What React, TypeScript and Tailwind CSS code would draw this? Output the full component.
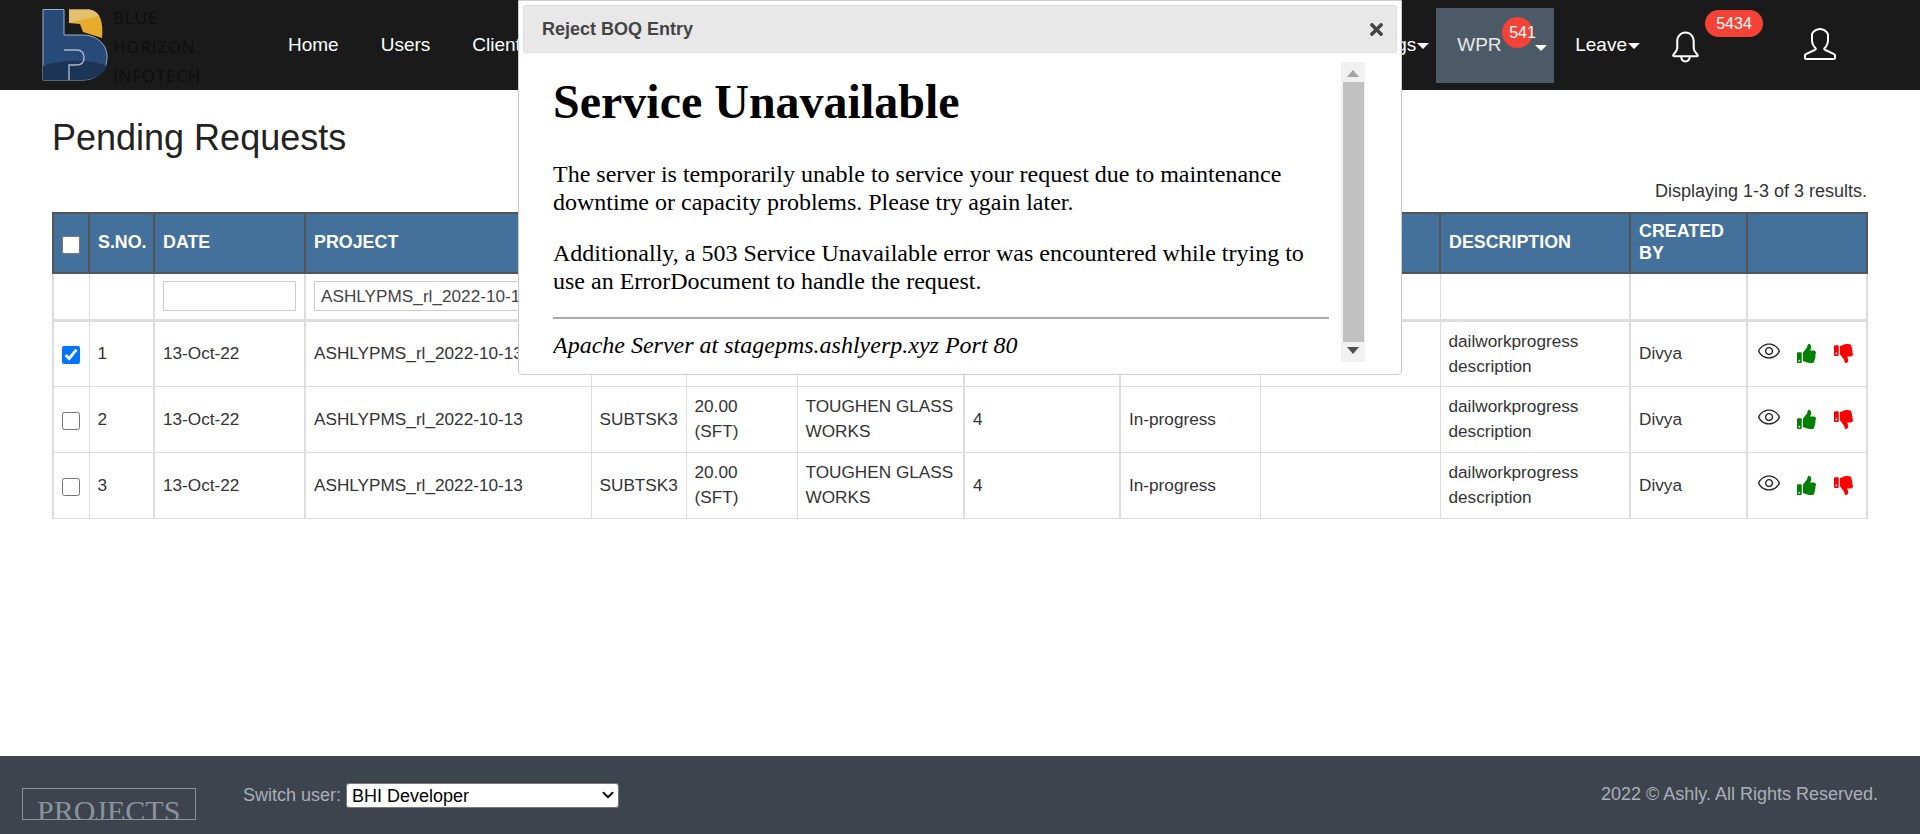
import React from "react";
import { FaThumbsUp, FaThumbsDown, FaTimes } from "react-icons/fa";
import { SlEye, SlBell, SlUser } from "react-icons/sl";
import { ChevronDown } from "lucide-react";

const cols = [
  { w: 36, b: "border-r" },
  { w: 65, b: "border-r-2" },
  { w: 151, b: "border-r-2" },
  { w: 286, b: "border-r" },
  { w: 95, b: "border-r" },
  { w: 111, b: "border-r" },
  { w: 167, b: "border-r-2" },
  { w: 156, b: "border-r-2" },
  { w: 140, b: "border-r" },
  { w: 180, b: "border-r" },
  { w: 190, b: "border-r-2" },
  { w: 117, b: "border-r-2" },
  { w: 120, b: "" },
];

const headers = ["", "S.NO.", "DATE", "PROJECT", "", "", "", "", "", "", "DESCRIPTION", "CREATED BY", ""];

function Logo() {
  return (
    <svg viewBox="0 0 200 90" className="h-[90px] w-[200px] shrink-0">
      <g transform="translate(19 0)">
        <path d="M24 9.5H45V35H63C78 35 88 44 88 57C88 71 78 80 63 80H24Z" fill="#284a79" stroke="#9fb0c4" strokeWidth="1" />
        <path d="M24 66C40 60 70 58 88 66C84 75 76 80 63 80H24Z" fill="#1c3557" />
        <path d="M45 50H58C63 50 65 53 65 58C65 63 62 65 57 65H50V80" fill="none" stroke="#a9b6c6" strokeWidth="1.4" />
        <path d="M50 9.5H68C80 9.5 85 20 83 38L64 32L61 24L50 23Z" fill="#e6ad2c" />
        <path d="M50 9.5H68C74 9.5 78 12 80 16L62 20L50 23Z" fill="#e2c06e" />
      </g>
    </svg>
  );
}

function Caret() {
  return <span className="ml-[1px] inline-block border-x-[6px] border-t-[6px] border-x-transparent border-t-white align-middle" />;
}

function NavItem({ label, caret, tight }: { label: string; caret?: boolean; tight?: boolean }) {
  return (
    <div className={`flex h-[75px] items-center whitespace-nowrap text-[19px] text-white ${tight ? "pl-[21px] pr-[7px]" : "px-[21px]"}`}>
      {label}
      {caret && <Caret />}
    </div>
  );
}

function Header() {
  return (
    <header className="flex h-[90px] shrink-0 items-start bg-[#1a1a1a]">
      <div className="relative w-[267px] shrink-0">
        <Logo />
        <div className="absolute left-[113px] top-[3px] font-['Open_Sans',sans-serif] text-[17px] leading-[29px] tracking-[0.8px] text-[#0e0e0e]">
          <div>BLUE</div>
          <div>HORIZON</div>
          <div>INFOTECH</div>
        </div>
      </div>
      <nav className="mt-[8px] flex">
        <NavItem label="Home" />
        <NavItem label="Users" />
        <NavItem label="Clients" />
      </nav>
      <div className="ml-auto mt-[8px] flex items-start pr-[84px]">
        <NavItem label="Settings" caret tight />
        <div className="relative flex h-[75px] w-[118px] items-center bg-[#4c5a67] pl-[21px] text-[19px] text-[#e8e8e8]">
          WPR
          <span className="absolute left-[66px] top-[9px] flex h-[31px] w-[31px] items-center whitespace-nowrap rounded-full bg-[#f44336] pl-[7px] text-[16px] text-white">541</span>
          <span className="absolute left-[99px] top-[37px] border-x-[6px] border-t-[6px] border-x-transparent border-t-white" />
        </div>
        <NavItem label="Leave" caret />
        <div className="relative ml-[9px] mt-[23px] h-[32px] w-[30px] text-white">
          <SlBell className="h-[32px] w-[31px]" />
          <span className="absolute left-[35px] top-[-21px] flex h-[27px] w-[58px] items-center justify-center rounded-full bg-[#f44336] text-[16px] text-white">5434</span>
        </div>
        <div className="ml-[104px] mt-[20px] text-white">
          <SlUser className="h-[32px] w-[32px]" />
        </div>
      </div>
    </header>
  );
}

function Actions() {
  return (
    <div className="flex items-center pl-[10px]">
      <SlEye className="mb-[5px] h-[22px] w-[22px] text-[#222]" />
      <FaThumbsUp className="ml-[17px] h-[19px] w-[19px] text-[#008000]" />
      <FaThumbsDown className="ml-[18px] h-[19px] w-[19px] text-[#ff0000]" />
    </div>
  );
}

function Row({ n, checked, covered }: { n: number; checked?: boolean; covered?: boolean }) {
  const cells: React.ReactNode[] = [
    <input type="checkbox" defaultChecked={checked} className="mt-[3px] block h-[18px] w-[18px]" />,
    n,
    "13-Oct-22",
    "ASHLYPMS_rl_2022-10-13",
    covered ? "" : "SUBTSK3",
    covered ? "" : <>20.00<br />(SFT)</>,
    covered ? "" : <>TOUGHEN GLASS<br />WORKS</>,
    covered ? "" : "4",
    covered ? "" : "In-progress",
    "",
    <>dailworkprogress<br />description</>,
    "Divya",
    <Actions />,
  ];
  return (
    <tr className="h-[66px]">
      {cells.map((c, i) => (
        <td key={i} className={`border-b border-[#ddd] ${cols[i].b} ${i === 0 ? "border-l-2 px-[8px]" : "px-[8px]"} ${i === 12 ? "border-r-2 !px-0" : ""} align-middle text-[17.2px] leading-[25px] text-[#333]`}>
          {c}
        </td>
      ))}
    </tr>
  );
}

function PendingTable() {
  return (
    <table className="w-[1815px] table-fixed border-collapse font-['Liberation_Sans',sans-serif]">
      <colgroup>
        {cols.map((c, i) => (
          <col key={i} span={1} width={c.w} />
        ))}
      </colgroup>
      <thead>
        <tr className="h-[60px] bg-[#44709c]">
          {headers.map((h, i) => (
            <th key={i} className="border-y-2 border-r-2 border-[#555] px-[8px] pb-[3px] text-left align-middle text-[17.85px] font-bold leading-[22px] text-white first:border-l-2">
              {i === 0 ? <input type="checkbox" className="mt-[6px] block h-[18px] w-[18px]" /> : h}
            </th>
          ))}
        </tr>
        <tr className="h-[47px] border-b-[3px] border-[#ddd]">
          {headers.map((_, i) => (
            <td key={i} className={`${cols[i].b} ${i === 0 ? "border-l-2" : ""} ${i === 12 ? "border-r-2" : ""} border-[#ddd] px-[8px] align-middle`}>
              {i === 2 && <input className="block h-[30px] w-full border border-[#ccc] bg-white" />}
              {i === 3 && <input defaultValue="ASHLYPMS_rl_2022-10-13" className="block h-[30px] w-full border border-[#ccc] bg-white px-[6px] text-[17.2px] text-[#444]" />}
            </td>
          ))}
        </tr>
      </thead>
      <tbody>
        <Row n={1} checked covered />
        <Row n={2} />
        <Row n={3} />
      </tbody>
    </table>
  );
}

function Modal() {
  return (
    <div className="absolute left-[518px] top-0 flex h-[375px] w-[884px] flex-col rounded-b-[4px] border border-[#ccc] bg-white px-[4px] pt-[4px]">
      <div className="flex h-[48px] shrink-0 items-center justify-between rounded-[3px] border border-[#ddd] bg-[#e8e8e8] pl-[18px] pr-[11px] font-['Liberation_Sans',sans-serif] text-[18px] font-bold text-[#444]">
        <span>Reject BOQ Entry</span>
        <FaTimes className="h-[19px] w-[17px] text-[#444]" />
      </div>
      <div className="mt-[9px] flex h-[300px] pl-[30px]">
        <div className="w-[776px] shrink-0 overflow-hidden font-['Liberation_Serif',serif] text-[24px] leading-[27.6px] text-black">
          <h1 className="mb-[32px] mt-[12px] text-[48px] font-bold leading-[55px]">Service Unavailable</h1>
          <p>The server is temporarily unable to service your request due to maintenance downtime or capacity problems. Please try again later.</p>
          <p className="mt-[24px]">Additionally, a 503 Service Unavailable error was encountered while trying to use an ErrorDocument to handle the request.</p>
          <hr className="mt-[22px] border-t-2 border-[#aaa]" />
          <p className="mt-[13px] italic">Apache Server at stagepms.ashlyerp.xyz Port 80</p>
        </div>
        <div className="ml-[12px] flex h-[300px] w-[24px] flex-col items-center justify-between bg-[#f1f1f1] py-[8px]">
          <span className="border-x-[6px] border-b-[7px] border-x-transparent border-b-[#a3a3a3]" />
          <div className="my-[5px] w-[21px] flex-1 bg-[#c1c1c1]" />
          <span className="border-x-[6px] border-t-[7px] border-x-transparent border-t-[#505050]" />
        </div>
      </div>
    </div>
  );
}

export default function App() {
  return (
    <div className="relative flex h-[834px] w-[1920px] flex-col overflow-hidden bg-white font-['Liberation_Sans',sans-serif]">
      <Header />
      <main className="flex-1 pl-[52px]">
        <h1 className="mt-[24px] text-[36px] font-normal leading-[48px] text-[#222]">Pending Requests</h1>
        <div className="mt-[17px] w-[1815px] text-right text-[18px] leading-[24px] text-[#333]">Displaying 1-3 of 3 results.</div>
        <div className="mt-[9px]">
          <PendingTable />
        </div>
      </main>
      <footer className="flex h-[78px] shrink-0 items-start bg-[#3d444d] pl-[22px] pr-[42px]">
        <div className="mt-[32px] h-[32px] w-[174px] overflow-hidden border border-[#8b929c] pl-[14px] font-['Liberation_Serif',serif] text-[30px] leading-[44px] text-[#8b929c]">PROJECTS</div>
        <div className="ml-[47px] mt-[26px] flex items-center text-[18px] text-[#aab0b8]">
          Switch user:
          <div className="relative ml-[5px]">
            <select className="block h-[25px] w-[273px] appearance-none rounded-[3px] border border-[#777] bg-white px-[5px] text-[18px] leading-[20px] text-black">
              <option>BHI Developer</option>
            </select>
            <ChevronDown className="pointer-events-none absolute right-[2px] top-[3px] h-[18px] w-[18px] text-black" strokeWidth={2.6} />
          </div>
        </div>
        <div className="ml-auto mt-[26px] text-[18px] leading-[24px] text-[#aab0b8]">2022 © Ashly. All Rights Reserved.</div>
      </footer>
      <Modal />
    </div>
  );
}
